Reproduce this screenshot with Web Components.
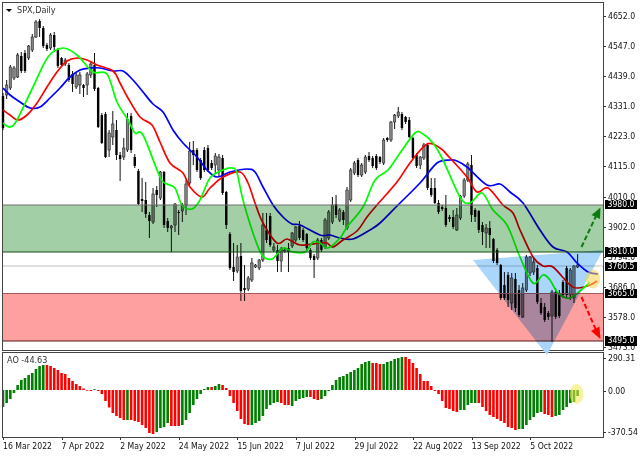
<!DOCTYPE html>
<html>
<head>
<meta charset="utf-8">
<title>SPX,Daily</title>
<style>
  html, body { margin: 0; padding: 0; background: #fff; }
  body { font-family: "DejaVu Sans", "Liberation Sans", Arial, sans-serif; font-stretch: condensed; font-size: 8.6px; width: 640px; height: 457px; overflow: hidden; }
</style>
</head>
<body>
<chart-window>
  <price-pane slot="price"></price-pane>
  <price-axis slot="price-axis"></price-axis>
  <ao-pane slot="ao"></ao-pane>
  <ao-axis slot="ao-axis"></ao-axis>
  <time-axis slot="time"></time-axis>
</chart-window>
<script>
const BAR = 3.66;
const barX = (i) => 3 + BAR * i;
const SVG_NS = 'xmlns="http://www.w3.org/2000/svg"';

// hi, body top, body bottom, lo, 1 = up candle (traced in page pixels)
const candles = [
  [93,96,128,130,0],[80,85,95,99,1],[65,67,88,90,1],[66,68,78,80,1],[53,55,77,78,1],
  [52,56,71,73,0],[50,53,71,73,0],[45,46,58,60,1],[34,37,50,52,1],[20,22,37,38,1],
  [19,21,28,37,0],[26,28,46,48,0],[43,45,49,51,0],[33,35,48,50,1],[32,35,47,52,0],
  [48,50,66,68,0],[57,58,65,67,0],[58,60,64,66,1],[63,65,80,82,0],[71,74,84,92,0],
  [73,75,87,89,1],[72,75,85,94,1],[84,85,88,97,0],[72,74,85,95,1],[62,64,75,78,1],
  [53,65,89,91,0],[87,88,127,128,0],[113,115,143,144,0],[112,114,157,158,0],[130,133,150,157,1],
  [111,124,137,145,1],[120,130,155,160,0],[152,155,159,181,0],[138,148,157,160,1],[113,119,150,152,1],
  [113,116,150,153,0],[154,157,166,168,0],[169,171,204,205,0],[178,199,201,212,0],[182,200,214,218,0],
  [212,215,221,238,0],[188,194,222,224,1],[186,190,195,207,0],[171,172,198,200,1],[171,172,225,228,0],
  [218,221,228,232,0],[225,226,228,252,1],[203,204,225,232,1],[210,212,213,235,0],[203,205,211,222,1],
  [180,184,205,215,1],[142,151,183,185,1],[141,150,155,165,0],[148,150,170,172,0],[158,160,178,180,0],
  [147,150,170,172,0],[145,148,170,172,0],[160,163,168,170,0],[153,156,165,174,1],[154,157,170,176,1],
  [155,158,193,195,0],[191,192,225,229,0],[232,234,268,270,0],[243,267,272,281,0],[245,257,271,273,1],
  [243,256,291,301,0],[265,288,290,301,0],[276,278,289,291,1],[258,263,280,282,1],[264,265,267,268,1],
  [259,260,268,270,1],[213,225,260,262,1],[213,230,240,243,0],[213,216,245,247,0],[243,247,250,252,1],
  [245,250,261,272,0],[247,249,261,272,1],[248,250,251,253,1],[243,248,252,272,0],[232,233,246,248,1],
  [226,227,240,242,1],[221,226,238,240,0],[228,230,240,242,0],[233,234,248,250,0],[248,250,258,260,0],
  [254,256,260,278,0],[238,240,258,260,1],[238,240,250,252,0],[218,220,247,249,1],[210,212,238,240,1],
  [197,205,222,224,1],[195,204,215,218,0],[208,210,220,222,1],[210,212,220,225,0],[187,190,228,230,1],
  [168,170,200,202,1],[161,163,173,175,1],[158,160,175,177,0],[163,165,175,177,1],[155,157,172,174,1],
  [152,156,160,162,0],[156,158,166,168,0],[154,156,168,170,0],[156,157,162,164,0],[138,140,163,165,1],
  [137,138,140,142,0],[121,122,140,142,1],[114,115,122,129,1],[107,112,116,118,1],[112,114,128,130,0],
  [116,117,122,124,0],[117,120,137,138,0],[137,138,158,159,0],[153,155,166,168,0],[156,157,165,169,1],
  [143,145,158,160,1],[143,145,188,190,0],[178,188,195,197,0],[178,188,203,204,0],[200,203,212,214,0],
  [205,207,209,211,0],[195,208,225,227,0],[215,217,219,222,0],[210,217,227,229,0],[208,215,230,231,1],
  [195,196,218,220,1],[178,180,196,198,1],[162,164,180,182,1],[155,165,215,222,0],[208,210,217,222,0],
  [210,211,230,233,0],[222,225,232,245,0],[224,228,233,248,1],[221,228,235,248,0],[238,239,261,263,0],
  [248,250,263,265,0],[264,265,298,300,0],[272,285,298,300,0],[272,275,300,307,0],[273,278,303,310,1],
  [273,279,308,312,0],[285,290,315,317,0],[283,288,317,318,1],[255,257,290,292,1],[256,257,273,276,1],
  [259,262,272,275,1],[265,268,302,304,0],[298,303,313,315,0],[303,307,320,322,0],[311,313,317,320,0],
  [290,292,316,342,1],[288,292,317,319,0],[290,295,316,318,0],[280,282,295,298,0],[266,268,295,298,0],
  [268,270,295,300,1],[265,266,298,303,1],[254,265,267,268,1]
];

// AO histogram runs: colour, heights above the zero line (up is +)
const aoBars = [
  ['g', [-17,-13,-9,-3,5,10,12,15,17,21,24,25]],
  ['r', [25,24,22,20,17,16,12,9,6,4,1.5,-0.7,-1]],
  ['g', [0.8]],
  ['r', [-1,-4,-11,-17.5,-23,-26,-28,-30]],
  ['g', [-30]],
  ['r', [-30,-31,-32,-35,-38,-43,-44]],
  ['g', [-42,-38,-37,-33]],
  ['r', [-36,-36,-36]],
  ['g', [-35,-30,-23,-15,-9,-4,1,3]],
  ['r', [3]],
  ['g', [4,6]],
  ['r', [5,2,-6,-13,-21,-29,-34,-35]],
  ['g', [-35,-33,-31,-26,-19,-15,-13,-12]],
  ['r', [-13,-15,-15]],
  ['g', [-16,-11,-9,-8,-7]],
  ['r', [-7,-9,-10]],
  ['g', [-9,-6,-1,5,10,13,14,16,18,20,22,26,28,29]],
  ['r', [27,27,26]],
  ['g', [26,28,29,31,32,33]],
  ['r', [33,31,27,22,16,9,9,4,-1,-4,-11,-18,-19,-21,-22]],
  ['g', [-20,-20,-15,-13,-13]],
  ['r', [-13,-17,-21,-25,-27,-29,-31,-33,-37,-38,-40]],
  ['g', [-39,-39,-35,-30,-27,-23,-22]],
  ['r', [-24,-25,-27]],
  ['g', [-26,-25,-20,-17,-13,-12,-6]]
];

const smooth = (pts) => {
  // catmull-rom through the traced points, so the moving averages stay soft
  let d = `M${pts[0][0]} ${pts[0][1]}`;
  for (let i = 0; i < pts.length - 1; i++) {
    const p0 = pts[i - 1] || pts[i], p1 = pts[i], p2 = pts[i + 1], p3 = pts[i + 2] || p2;
    const c1x = p1[0] + (p2[0] - p0[0]) / 6, c1y = p1[1] + (p2[1] - p0[1]) / 6;
    const c2x = p2[0] - (p3[0] - p1[0]) / 6, c2y = p2[1] - (p3[1] - p1[1]) / 6;
    d += `C${c1x.toFixed(1)} ${c1y.toFixed(1)} ${c2x.toFixed(1)} ${c2y.toFixed(1)} ${p2[0]} ${p2[1]}`;
  }
  return d;
};

const blueLine = [[3,88],[10,95],[20,102],[30,108],[40,107],[50,98],[60,88],[70,77],[80,70],[90,68],[100,68],[113,71],[123,71],[133,80],[143,92],[153,104],[163,112],[173,130],[183,143],[197,157],[207,170],[217,177],[230,172],[247,169],[255,172],[263,187],[273,205],[283,217],[292,224],[300,225],[320,235],[330,235],[340,238],[353,239],[370,230],[380,223],[397,206],[420,183],[437,163],[450,160],[457,161],[467,167],[487,185],[500,184],[510,192],[523,203],[540,230],[553,247],[567,252],[577,263],[588,272],[598,274]];
const redLine = [[3,110],[10,115],[18,120],[27,115],[37,103],[47,87],[57,72],[67,61],[77,58],[87,60],[97,65],[113,71],[120,83],[128,98],[140,117],[152,125],[160,142],[170,163],[183,173],[190,187],[202,197],[210,188],[223,177],[240,172],[248,183],[255,203],[263,223],[277,243],[287,239],[300,245],[320,243],[327,243],[333,247],[343,240],[357,231],[367,217],[377,205],[397,182],[410,163],[427,144],[440,148],[450,158],[467,177],[477,192],[488,188],[503,205],[513,213],[520,230],[533,257],[543,266],[553,267],[570,285],[578,288],[590,285],[597,281]];
const greenLine = [[3,123],[10,127],[17,120],[33,87],[48,57],[63,48],[77,55],[93,72],[107,74],[117,102],[128,120],[135,133],[143,135],[160,177],[167,184],[175,188],[182,205],[192,209],[200,200],[210,178],[223,170],[232,168],[237,173],[243,200],[253,233],[262,255],[272,259],[283,248],[293,252],[305,252],[313,242],[320,243],[328,248],[340,238],[347,227],[363,207],[375,180],[388,170],[400,153],[415,133],[423,134],[433,143],[443,160],[460,197],[470,203],[482,193],[493,210],[507,225],[520,257],[533,283],[543,275],[550,280],[558,293],[570,298],[587,285],[589,282]];

const candleMarkup = () => candles.map((c, i) => {
  const x = barX(i).toFixed(2);
  const fill = c[4] ? '#858585' : '#000';
  return `<line x1="${x}" x2="${x}" y1="${c[0]}" y2="${c[3]}" stroke="#111" stroke-width="1"/>` +
    `<rect x="${(barX(i) - 1.2).toFixed(2)}" y="${c[1]}" width="2.4" height="${c[2] - c[1]}" fill="${fill}" stroke="#111" stroke-width="${c[4] ? 0.5 : 0}"/>`;
}).join('');

const priceTemplate = document.createElement('template');
priceTemplate.innerHTML = `
  <style>
    :host { display: block; position: relative; height: 100%; }
    svg { display: block; width: 100%; height: 100%; overflow: visible; }
    .title { position: absolute; left: 3px; top: 2px; display: flex; align-items: center; gap: 5px; font-size: 9px; color: #333; line-height: 11px; }
    .title i { width: 0; height: 0; border-left: 3px solid transparent; border-right: 3px solid transparent; border-top: 3px solid #000; }
    .zone { mix-blend-mode: multiply; }
    #candles { filter: blur(.2px); }
  </style>
  <svg ${SVG_NS} viewBox="3 3 600 347">
    <line x1="3" x2="603" y1="266" y2="266" stroke="#c2c2c2" stroke-width="1"/>
    <g id="candles"></g>
    <g fill="none" stroke-width="1.7" stroke-linejoin="round">
      <path id="blue" stroke="#0000ff"/>
      <path id="red" stroke="#ff0000"/>
      <path id="green" stroke="#00ff00"/>
    </g>
    <rect class="zone" x="3" y="205" width="600" height="47" fill="#a2cfa6"/>
    <rect class="zone" x="3" y="293.5" width="600" height="47.5" fill="#ffa0a0"/>
    <line x1="3" x2="603" y1="205" y2="205" stroke="#6f6f6f" stroke-width="1"/>
    <line x1="3" x2="603" y1="252" y2="252" stroke="#174d17" stroke-width="1"/>
    <line x1="3" x2="603" y1="293.5" y2="293.5" stroke="#a85a5a" stroke-width="1"/>
    <line x1="3" x2="603" y1="341" y2="341" stroke="#5d1414" stroke-width="1"/>
    <polygon class="zone" points="473,260 603,250 550.2,349 542.3,349" fill="#a9d6fa"/>
    <polygon points="542.3,349 550.2,349 547,355" fill="#a9d6fa"/>
    <ellipse cx="593" cy="279" rx="7.2" ry="9.5" fill="#f8d24c" fill-opacity=".55"/>
    <g stroke-width="2" stroke-dasharray="5 2.6" fill="none">
      <line x1="581.5" y1="247" x2="596" y2="216" stroke="#0d7a12"/>
      <line x1="581.5" y1="297" x2="596" y2="330" stroke="#ff0000"/>
    </g>
    <polygon points="600.5,207.5 600,219 591.5,215" fill="#0d7a12"/>
    <polygon points="600.5,339 591,331 599.5,326.5" fill="#ff0000"/>
  </svg>
  <div class="title"><i></i><span>SPX,Daily</span></div>
`;

class PricePane extends HTMLElement {
  constructor() {
    super();
    const root = this.attachShadow({ mode: 'open' });
    root.appendChild(priceTemplate.content.cloneNode(true));
    root.getElementById('candles').innerHTML = candleMarkup();
    root.getElementById('blue').setAttribute('d', smooth(blueLine));
    root.getElementById('red').setAttribute('d', smooth(redLine));
    root.getElementById('green').setAttribute('d', smooth(greenLine));
  }
}
customElements.define('price-pane', PricePane);

const aoTemplate = document.createElement('template');
aoTemplate.innerHTML = `
  <style>
    :host { display: block; position: relative; height: 100%; }
    svg { display: block; width: 100%; height: 100%; }
    .title { position: absolute; left: 4px; top: 2px; font-size: 9px; color: #333; line-height: 11px; }
  </style>
  <svg ${SVG_NS} viewBox="3 353 600 84">
    <g id="bars"></g>
    <ellipse cx="576.5" cy="394" rx="6.8" ry="10" fill="#f2e64e" fill-opacity=".55"/>
  </svg>
  <div class="title">AO -44.63</div>
`;

class AoPane extends HTMLElement {
  constructor() {
    super();
    const root = this.attachShadow({ mode: 'open' });
    root.appendChild(aoTemplate.content.cloneNode(true));
    let i = 0, out = '';
    aoBars.forEach(([col, vals]) => vals.forEach((v) => {
      const x = (barX(i) - 1.3).toFixed(2);
      const y = v > 0 ? 390 - v : 390;
      out += `<rect x="${x}" y="${y}" width="2.6" height="${Math.abs(v)}" fill="${col === 'g' ? '#008000' : '#ff0000'}"/>`;
      i++;
    }));
    root.getElementById('bars').innerHTML = out;
  }
}
customElements.define('ao-pane', AoPane);

// a scale of tick labels; each tick sits at its own y, tags are the black boxes
const axisStyle = `
  :host { display: block; position: relative; height: 100%; color: #111; }
  .tick { position: absolute; left: 0; height: 10px; line-height: 10px; padding-left: 4px; white-space: nowrap; }
  .tick::before { content: ""; position: absolute; left: 0; top: 5px; width: 2px; height: 1px; background: #333; }
  .tag { position: absolute; left: 1px; height: 9.5px; line-height: 9.5px; width: 32px; background: #000; color: #fff; text-align: center; }
`;

class PriceAxis extends HTMLElement {
  constructor() {
    super();
    const root = this.attachShadow({ mode: 'open' });
    const ticks = [['4652.0',16],['4547.0',46],['4439.0',76],['4331.0',106],['4223.0',136],['4115.0',166],['4010.0',197],['3902.0',227],['3794.0',257],['3686.0',287],['3578.0',317],['3473.0',347]];
    const tags = [['3980.0',204.5],['3810.0',252],['3760.5',266.5],['3665.0',293.5],['3495.0',341]];
    root.innerHTML = `<style>${axisStyle}</style>` +
      ticks.map(([t, y]) => `<div class="tick" style="top:${y - 2 - 5}px">${t}</div>`).join('') +
      tags.map(([t, y]) => `<div class="tag" style="top:${y - 2 - 4.75}px">${t}</div>`).join('');
  }
}
customElements.define('price-axis', PriceAxis);

class AoAxis extends HTMLElement {
  constructor() {
    super();
    const root = this.attachShadow({ mode: 'open' });
    const ticks = [['290.31',358],['0.00',390.5],['-370.54',431.5]];
    root.innerHTML = `<style>${axisStyle}</style>` +
      ticks.map(([t, y]) => `<div class="tick" style="top:${y - 351 - 5}px">${t}</div>`).join('');
  }
}
customElements.define('ao-axis', AoAxis);

const timeTemplate = document.createElement('template');
timeTemplate.innerHTML = `
  <style>
    :host { display: flex; color: #111; }
    .cell { flex: 0 0 58.6px; position: relative; padding-top: 3px; white-space: nowrap; line-height: 11px; }
    .cell::before { content: ""; position: absolute; left: 0; top: 0; width: 1px; height: 2px; background: #333; }
  </style>
`;

class TimeAxis extends HTMLElement {
  constructor() {
    super();
    const root = this.attachShadow({ mode: 'open' });
    root.appendChild(timeTemplate.content.cloneNode(true));
    ['16 Mar 2022','7 Apr 2022','2 May 2022','24 May 2022','15 Jun 2022','7 Jul 2022','29 Jul 2022','22 Aug 2022','13 Sep 2022','5 Oct 2022'].forEach((t) => {
      const cell = document.createElement('div');
      cell.className = 'cell';
      cell.textContent = t;
      root.appendChild(cell);
    });
  }
}
customElements.define('time-axis', TimeAxis);

const windowTemplate = document.createElement('template');
windowTemplate.innerHTML = `
  <style>
    :host {
      display: grid;
      grid-template-columns: 602px 36px;
      grid-template-rows: 349px 87px 19px;
      padding: 2px 0 0 2px;
      box-sizing: border-box;
      width: 640px;
      height: 457px;
    }
    .pane { border: 1px solid #444; box-sizing: border-box; min-width: 0; min-height: 0; }
    .sub { margin-top: 1px; }
    .side { min-width: 0; }
    .time { grid-column: 1 / 3; padding-left: 1px; }
  </style>
  <div class="pane main"><slot name="price"></slot></div>
  <div class="side"><slot name="price-axis"></slot></div>
  <div class="pane sub"><slot name="ao"></slot></div>
  <div class="side"><slot name="ao-axis"></slot></div>
  <div class="time"><slot name="time"></slot></div>
`;

class ChartWindow extends HTMLElement {
  constructor() {
    super();
    this.attachShadow({ mode: 'open' }).appendChild(windowTemplate.content.cloneNode(true));
  }
}
customElements.define('chart-window', ChartWindow);
</script>
</body>
</html>
